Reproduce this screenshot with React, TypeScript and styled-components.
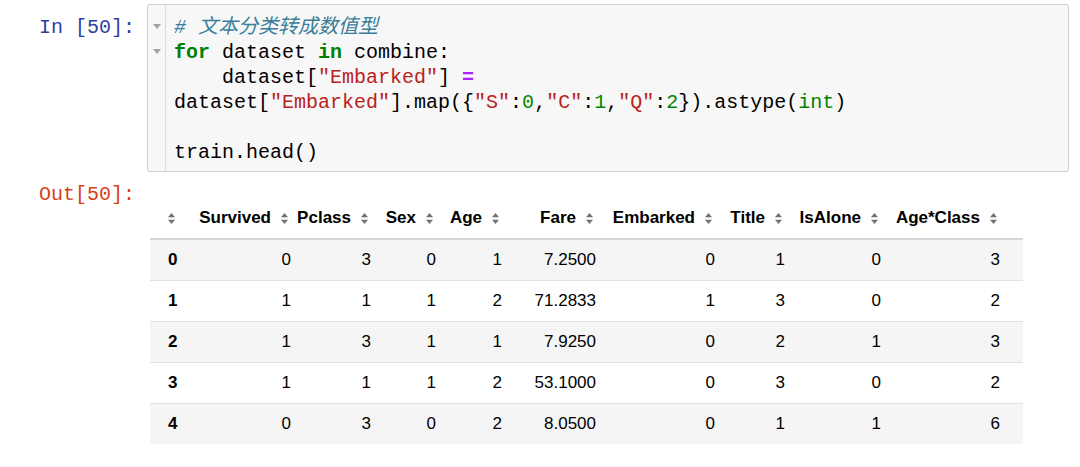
import styled, { createGlobalStyle } from "styled-components";

const GlobalStyle = createGlobalStyle`
  body {
    margin: 0;
    background: #ffffff;
  }
`;

const mono = `"Liberation Mono", "DejaVu Sans Mono", "Noto Sans CJK SC", monospace`;

const Notebook = styled.div`
  padding-top: 4px;
  width: 1080px;
`;

const CellRow = styled.div<{ $gap?: number }>`
  display: flex;
  align-items: flex-start;
  margin-top: ${(p) => p.$gap ?? 0}px;
`;

const Prompt = styled.div<{ $out?: boolean }>`
  width: 147px;
  flex: none;
  box-sizing: border-box;
  padding: ${(p) => (p.$out ? "0" : "11px")} 12px 0 0;
  text-align: right;
  font-family: ${mono};
  font-size: 20px;
  line-height: 25px;
  color: ${(p) => (p.$out ? "#D84315" : "#303F9F")};
  white-space: pre;
`;

const CodeBox = styled.div`
  flex: 1;
  margin-right: 11px;
  display: flex;
  border: 1px solid #cfcfcf;
  border-radius: 2px;
  background: #f7f7f7;
`;

const Gutter = styled.div`
  width: 17px;
  flex: none;
  border-right: 1px solid #dddddd;
  padding: 10px 0 6px;
`;

const FoldSlot = styled.div`
  height: 25px;
  display: flex;
  justify-content: center;
  padding-top: 9px;
  box-sizing: border-box;
`;

const FoldMark = styled.span`
  width: 0;
  height: 0;
  border-left: 4px solid transparent;
  border-right: 4px solid transparent;
  border-top: 5px solid #a3a3a3;
`;

const CodeLines = styled.pre`
  margin: 0;
  padding: 10px 0 6px 8px;
  font-family: ${mono};
  font-size: 20px;
  line-height: 25px;
  color: #000;
`;

const Comment = styled.span`
  color: #3a7e9a;
  font-style: italic;
`;
const Kw = styled.span`
  color: #008000;
  font-weight: bold;
`;
const Str = styled.span`
  color: #ba2121;
`;
const Num = styled.span`
  color: #008800;
`;
const Op = styled.span`
  color: #aa22ff;
  font-weight: bold;
`;
const Builtin = styled.span`
  color: #008000;
`;

const OutputArea = styled.div`
  padding: 16px 0 0 3px;
`;

const Table = styled.table`
  border-collapse: collapse;
  table-layout: fixed;
  width: 873px;
  font-family: "Liberation Sans", Arial, sans-serif;
  font-size: 17px;
  color: #000;
`;

const Th = styled.th<{ $index?: boolean }>`
  height: 40px;
  padding: 0 ${(p) => (p.$index ? 0 : 4)}px 0 ${(p) => (p.$index ? 18 : 0)}px;
  font-weight: bold;
  border-bottom: 2px solid #d6d6d6;
  &:last-child {
    padding-right: 23px;
  }
`;

const HeadLabel = styled.div<{ $index?: boolean }>`
  display: flex;
  align-items: center;
  justify-content: ${(p) => (p.$index ? "flex-start" : "flex-end")};
  gap: 10px;
  white-space: nowrap;
`;

const Row = styled.tr<{ $striped: boolean }>`
  background: ${(p) => (p.$striped ? "#f5f5f5" : "#ffffff")};
  & + & {
    border-top: 1px solid #e2e2e2;
  }
`;

const Td = styled.td<{ $index?: boolean }>`
  height: 40px;
  padding: 0 ${(p) => (p.$index ? 0 : 4)}px 0 ${(p) => (p.$index ? 18 : 0)}px;
  text-align: ${(p) => (p.$index ? "left" : "right")};
  font-weight: ${(p) => (p.$index ? "bold" : "normal")};
  &:last-child {
    padding-right: 23px;
  }
`;

const SortSvg = styled.svg<{ $index?: boolean }>`
  flex: none;
  display: block;
  margin-right: ${(p) => (p.$index ? 0 : 3)}px;
`;

const SortIcon = ({ index }: { index?: boolean }) => (
  <SortSvg $index={index} width="7" height="11" viewBox="0 0 7 11">
    <polygon points="3.5,0 7,4.3 0,4.3" fill="#727272" />
    <polygon points="0,6.7 7,6.7 3.5,11" fill="#727272" />
  </SortSvg>
);

const columns = [
  { name: "", width: 45 },
  { name: "Survived", width: 100 },
  { name: "Pclass", width: 80 },
  { name: "Sex", width: 65 },
  { name: "Age", width: 66 },
  { name: "Fare", width: 94 },
  { name: "Embarked", width: 119 },
  { name: "Title", width: 70 },
  { name: "IsAlone", width: 96 },
  { name: "Age*Class", width: 138 },
];

const rows = [
  ["0", "0", "3", "0", "1", "7.2500", "0", "1", "0", "3"],
  ["1", "1", "1", "1", "2", "71.2833", "1", "3", "0", "2"],
  ["2", "1", "3", "1", "1", "7.9250", "0", "2", "1", "3"],
  ["3", "1", "1", "1", "2", "53.1000", "0", "3", "0", "2"],
  ["4", "0", "3", "0", "2", "8.0500", "0", "1", "1", "6"],
];

const App = () => {
  return (
    <Notebook>
      <GlobalStyle />
      <CellRow>
        <Prompt>In [50]:</Prompt>
        <CodeBox>
          <Gutter>
            <FoldSlot>
              <FoldMark />
            </FoldSlot>
            <FoldSlot>
              <FoldMark />
            </FoldSlot>
          </Gutter>
          <CodeLines>
            <Comment># 文本分类转成数值型</Comment>
            {"\n"}
            <Kw>for</Kw> dataset <Kw>in</Kw> combine:{"\n"}
            {"    "}dataset[<Str>"Embarked"</Str>] <Op>=</Op>
            {"\n"}
            dataset[<Str>"Embarked"</Str>].map({"{"}
            <Str>"S"</Str>:<Num>0</Num>,<Str>"C"</Str>:<Num>1</Num>,
            <Str>"Q"</Str>:<Num>2</Num>
            {"}"}).astype(<Builtin>int</Builtin>){"\n"}
            {"\n"}
            train.head()
          </CodeLines>
        </CodeBox>
      </CellRow>
      <CellRow $gap={10}>
        <Prompt $out>Out[50]:</Prompt>
        <OutputArea>
          <Table>
            <colgroup>
              {columns.map((c, i) => (
                <col key={i} style={{ width: c.width }} />
              ))}
            </colgroup>
            <thead>
              <tr>
                {columns.map((c, i) => (
                  <Th key={i} $index={i === 0}>
                    <HeadLabel $index={i === 0}>
                      {c.name && <span>{c.name}</span>}
                      <SortIcon index={i === 0} />
                    </HeadLabel>
                  </Th>
                ))}
              </tr>
            </thead>
            <tbody>
              {rows.map((r, ri) => (
                <Row key={ri} $striped={ri % 2 === 0}>
                  {r.map((v, ci) => (
                    <Td key={ci} $index={ci === 0}>
                      {v}
                    </Td>
                  ))}
                </Row>
              ))}
            </tbody>
          </Table>
        </OutputArea>
      </CellRow>
    </Notebook>
  );
};

export default App;
